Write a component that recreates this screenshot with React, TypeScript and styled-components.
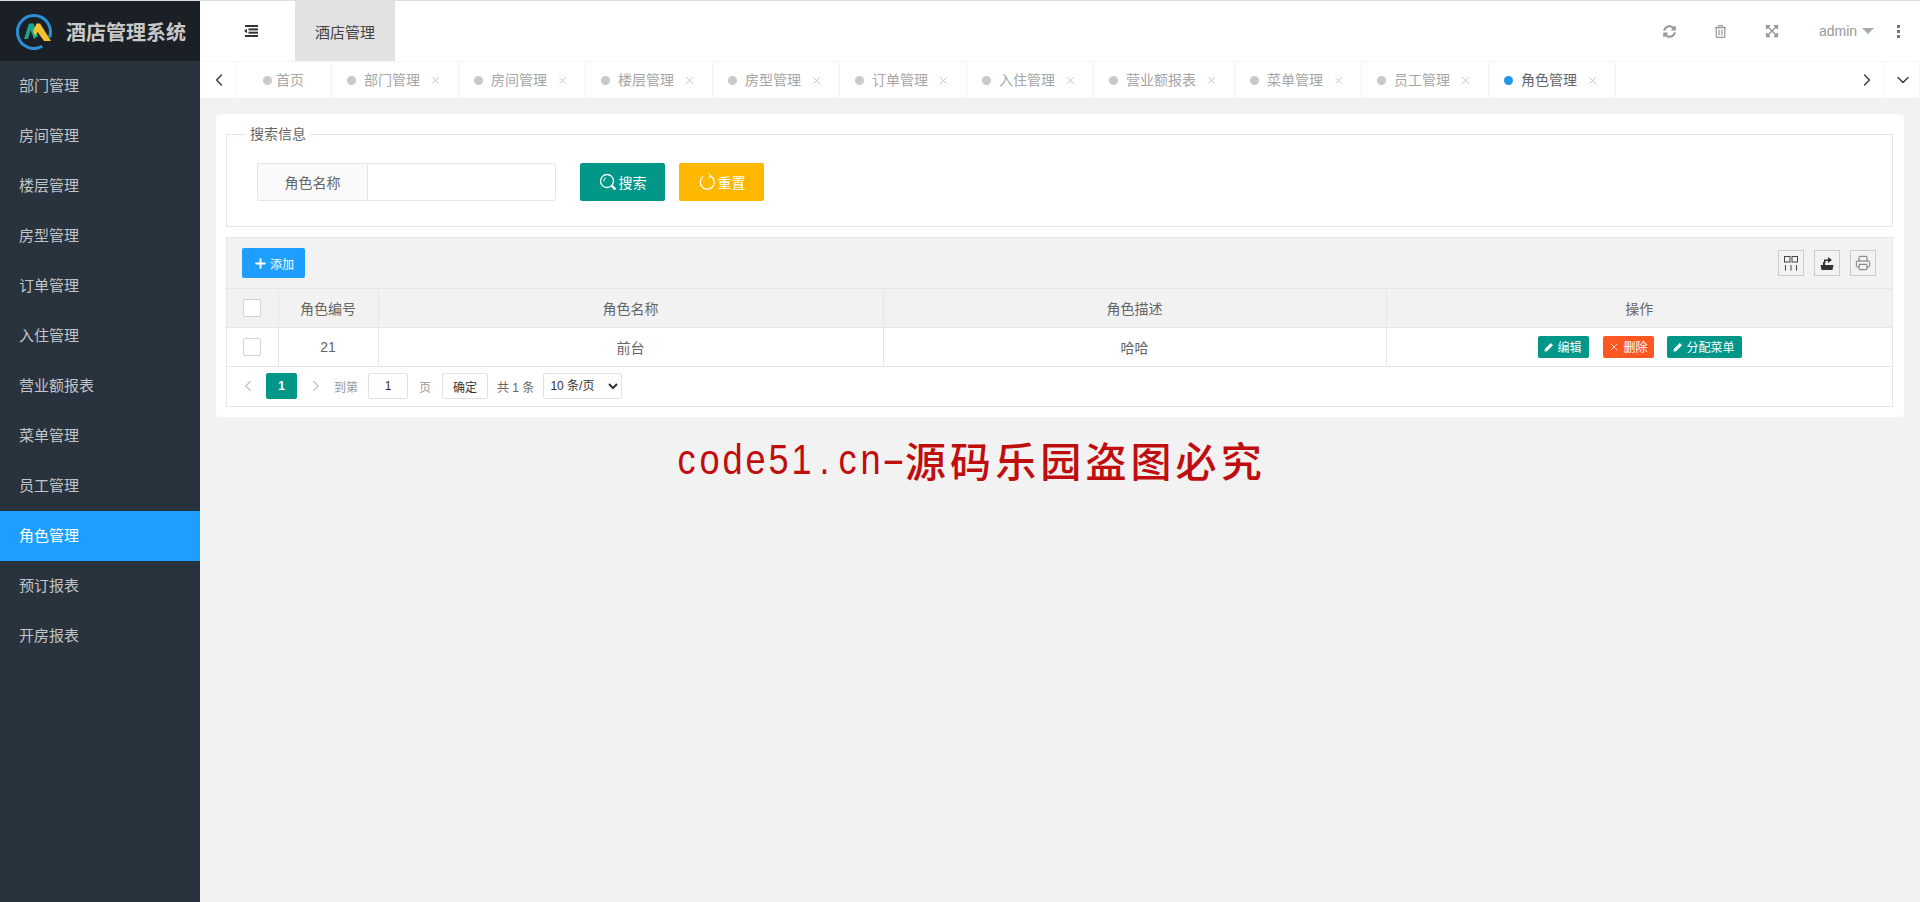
import React from "react";
import styled, { createGlobalStyle } from "styled-components";
import { ChevronLeft, ChevronRight, ChevronDown, Printer, X, Plus } from "lucide-react";
import { FaSyncAlt, FaRegTrashAlt, FaExpandArrowsAlt } from "react-icons/fa";

const Global = createGlobalStyle`
  html, body { margin: 0; padding: 0; height: 100%; background: #f2f2f2; }
  body { font-family: "Liberation Sans", "Noto Sans CJK SC", sans-serif; font-size: 14px; color: #666; overflow: hidden; }
  * { box-sizing: border-box; }
`;

const Page = styled.div`
  width: 1920px;
  height: 902px;
  display: flex;
  flex-direction: column;
  border-top: 1px solid #ddd;
`;
const Shell = styled.div`
  flex: 1;
  display: flex;
  min-height: 0;
`;
const Sidebar = styled.aside`
  width: 200px;
  flex: none;
  background: #28333e;
`;
const Brand = styled.div`
  height: 60px;
  background: #1b2027;
  display: flex;
  align-items: center;
  padding-left: 15px;
  gap: 13px;
`;
const BrandName = styled.span`
  font-size: 20px;
  font-weight: 700;
  color: #c8c8c8;
  white-space: nowrap;
`;
const Menu = styled.nav`
  display: flex;
  flex-direction: column;
`;
const MenuItem = styled.div<{ $active?: boolean }>`
  height: 50px;
  line-height: 50px;
  padding-left: 19px;
  font-size: 15px;
  color: ${(p) => (p.$active ? "#fff" : "rgba(255,255,255,.72)")};
  background: ${(p) => (p.$active ? "#1e9fff" : "transparent")};
`;
const Main = styled.main`
  flex: 1;
  min-width: 0;
  display: flex;
  flex-direction: column;
`;
const Header = styled.header`
  height: 60px;
  background: #fff;
  display: flex;
  align-items: stretch;
  color: #333;
`;
const Toggle = styled.div`
  width: 95px;
  display: flex;
  align-items: center;
  justify-content: center;
  padding-left: 7px;
  color: #333;
`;
const TopTab = styled.div`
  width: 100px;
  background: #e2e2e2;
  display: flex;
  align-items: center;
  justify-content: center;
  font-size: 15px;
  color: #444;
`;
const HeaderRight = styled.div`
  margin-left: auto;
  display: flex;
  align-items: stretch;
  color: #999;
`;
const HeaderIcon = styled.div`
  width: 51px;
  display: flex;
  align-items: center;
  justify-content: center;
`;
const UserItem = styled.div`
  width: 79px;
  padding-left: 22px;
  display: flex;
  align-items: center;
  gap: 5px;
  font-size: 14px;
  color: #999;
`;
const Caret = styled.span`
  width: 0;
  height: 0;
  border-style: solid;
  border-width: 6px 6px 0;
  border-color: #aaa transparent transparent;
`;
const DotsItem = styled.div`
  width: 44px;
  display: flex;
  flex-direction: column;
  align-items: center;
  justify-content: center;
  gap: 2px;
`;
const Dot3 = styled.i`
  width: 3px;
  height: 3px;
  background: #777;
`;
const TabBar = styled.div`
  height: 37px;
  background: #fff;
  border-top: 1px solid #f6f6f6;
  display: flex;
  align-items: stretch;
`;
const TabArrow = styled.div<{ $w: number }>`
  width: ${(p) => p.$w}px;
  flex: none;
  display: flex;
  align-items: center;
  justify-content: center;
  padding-left: 2px;
  color: #333;
  border-right: 1px solid #f6f6f6;
`;
const TabList = styled.div`
  flex: 1;
  display: flex;
  min-width: 0;
`;
const TabItem = styled.div<{ $home?: boolean }>`
  flex: none;
  display: flex;
  align-items: center;
  padding: 0 ${(p) => (p.$home ? "27px" : "17px 0 15px")};
  border-right: 1px solid #f2f2f2;
  font-size: 14px;
  line-height: 36px;
  white-space: nowrap;
`;
const TabLabel = styled.span<{ $active?: boolean }>`
  color: ${(p) => (p.$active ? "#666" : "#a6a6a6")};
`;
const TabDot = styled.i<{ $active?: boolean; $home?: boolean }>`
  width: 9px;
  height: 9px;
  border-radius: 50%;
  background: ${(p) => (p.$active ? "#2196e8" : "#c9c9c9")};
  margin-right: ${(p) => (p.$home ? 4 : 8)}px;
`;
const TabClose = styled.span`
  display: flex;
  margin-left: 10px;
  color: #aaa;
`;
const Content = styled.div`
  flex: 1;
  background: #f2f2f2;
  padding: 16px 16px 0;
`;
const Card = styled.section`
  background: #fff;
  border-radius: 4px;
  padding: 10px 11px 10px 10px;
`;
const Fieldset = styled.fieldset`
  margin: 0;
  padding: 19px 25px 25px 30px;
  border: 1px solid #e6e6e6;
`;
const Legend = styled.legend`
  margin-left: -11px;
  padding: 0 4px;
  font-size: 14px;
  line-height: 20px;
  color: #666;
`;
const SearchRow = styled.div`
  display: flex;
  align-items: stretch;
  height: 38px;
`;
const FieldLabel = styled.label`
  width: 110px;
  display: flex;
  align-items: center;
  justify-content: center;
  background: #fafafa;
  border: 1px solid #e6e6e6;
  border-right: 0;
  border-radius: 2px 0 0 2px;
  font-size: 14px;
  color: #666;
`;
const FieldInput = styled.input`
  width: 189px;
  border: 1px solid #e6e6e6;
  border-radius: 0 2px 2px 0;
  outline: 0;
  background: #fff;
`;
const SearchButton = styled.button<{ $bg: string; $gap: number }>`
  width: 85px;
  margin-left: ${(p) => p.$gap}px;
  border: 0;
  border-radius: 2px;
  background: ${(p) => p.$bg};
  color: #fff;
  font: inherit;
  font-size: 14px;
  display: flex;
  align-items: center;
  justify-content: center;
  gap: 2px;
  padding: 0;
`;
const TableBox = styled.div`
  margin-top: 10px;
  border: 1px solid #e6e6e6;
`;
const Toolbar = styled.div`
  height: 51px;
  background: #f2f2f2;
  display: flex;
  align-items: center;
  justify-content: space-between;
  padding: 0 16px 0 15px;
  border-bottom: 1px solid #e6e6e6;
`;
const AddButton = styled.button`
  width: 63px;
  height: 30px;
  border: 0;
  border-radius: 2px;
  background: #1e9fff;
  color: #fff;
  font: inherit;
  font-size: 12px;
  display: flex;
  align-items: center;
  justify-content: center;
  gap: 2px;
  padding: 0;
`;
const ToolIcons = styled.div`
  display: flex;
  gap: 10px;
`;
const ToolIcon = styled.div`
  width: 26px;
  height: 26px;
  border: 1px solid #ccc;
  display: flex;
  align-items: center;
  justify-content: center;
  color: #333;
`;
const Table = styled.table`
  width: 100%;
  table-layout: fixed;
  border-collapse: collapse;
  font-size: 14px;
`;
const Th = styled.th`
  height: 38px;
  background: #f2f2f2;
  border: 1px solid #e6e6e6;
  border-top: 0;
  font-weight: 400;
  color: #666;
  padding: 0;
  &:first-child { border-left: 0; }
  &:last-child { border-right: 0; }
`;
const Td = styled.td`
  height: 39px;
  background: #fff;
  border: 1px solid #e6e6e6;
  border-top: 0;
  text-align: center;
  color: #666;
  padding: 0;
  &:first-child { border-left: 0; }
  &:last-child { border-right: 0; }
`;
const Check = styled.span`
  display: inline-block;
  width: 18px;
  height: 18px;
  background: #fff;
  border: 1px solid #d2d2d2;
  border-radius: 2px;
  vertical-align: middle;
`;
const RowActions = styled.div`
  display: flex;
  align-items: center;
  padding-left: 151px;
`;
const RowButton = styled.button<{ $bg: string; $w: number; $gap: number }>`
  width: ${(p) => p.$w}px;
  height: 22px;
  margin-right: ${(p) => p.$gap}px;
  border: 0;
  border-radius: 2px;
  background: ${(p) => p.$bg};
  color: #fff;
  font: inherit;
  font-size: 12px;
  display: flex;
  align-items: center;
  justify-content: center;
  gap: 3px;
  padding: 0;
`;
const Pager = styled.div`
  height: 39px;
  display: flex;
  align-items: center;
  padding-left: 12px;
  font-size: 12px;
  color: #666;
`;
const PagerArrow = styled.span<{ $mr: number; $ml?: number }>`
  display: flex;
  color: #c2c2c2;
  margin-right: ${(p) => p.$mr}px;
  margin-left: ${(p) => p.$ml ?? 0}px;
`;
const PageNow = styled.span`
  width: 31px;
  height: 26px;
  background: #009688;
  color: #fff;
  border-radius: 2px;
  font-weight: 700;
  display: flex;
  align-items: center;
  justify-content: center;
`;
const PagerText = styled.span<{ $mr: number; $muted?: boolean }>`
  margin-right: ${(p) => p.$mr}px;
  color: ${(p) => (p.$muted ? "#999" : "#666")};
  white-space: nowrap;
`;
const PagerInput = styled.input`
  width: 40px;
  height: 26px;
  border: 1px solid #e2e2e2;
  border-radius: 2px;
  text-align: center;
  font: inherit;
  color: #333;
  outline: 0;
  margin-right: 11px;
  padding: 0;
`;
const PagerConfirm = styled.button`
  width: 46px;
  height: 26px;
  border: 1px solid #e2e2e2;
  border-radius: 2px;
  background: #fff;
  font: inherit;
  color: #333;
  margin-right: 9px;
  padding: 0;
`;
const PagerSelect = styled.select`
  width: 79px;
  height: 26px;
  border: 1px solid #e2e2e2;
  border-radius: 2px;
  background: #fff;
  font: inherit;
  color: #333;
  outline: 0;
  padding: 0 0 0 2px;
`;
const Watermark = styled.div`
  margin: 15px 0 0 459px;
  height: 55px;
  display: flex;
  align-items: center;
  color: #c00d0d;
  white-space: nowrap;
`;
const MarkCell = styled.span<{ $wide?: boolean }>`
  display: inline-block;
  width: 23px;
  text-align: center;
  font-size: 42px;
  line-height: 55px;
  font-family: "Liberation Sans", sans-serif;
  transform: scaleX(${(p) => (p.$wide ? 1.7 : 0.86)});
`;
const MarkCjk = styled.span`
  font-size: 41px;
  font-weight: 500;
  letter-spacing: 4.1px;
  line-height: 55px;
  font-family: "Noto Sans CJK SC", sans-serif;
`;

const Logo = () => (
  <svg width="38" height="38" viewBox="0 0 38 38">
    <path d="M27.250 34.300A16.500 16.500 0 1 1 34.500 25.600" fill="none" stroke="#2b8fd6" strokeWidth="3" />
    <path d="M9 27L14 11.500H18.500L23 24L19 27L15.500 18L13 27Z" fill="#17a88f" />
    <path d="M18 19L21.500 11.500H25L36 29H29L22.500 20L20 24Z" fill="#f2c230" />
  </svg>
);
const Indent = () => (
  <svg width="14" height="12" viewBox="0 0 14 12" fill="currentColor">
    <rect x="1" y="0" width="13" height="2" />
    <rect x="4.500" y="3.400" width="9.500" height="2" />
    <rect x="4.500" y="6.700" width="9.500" height="2" />
    <rect x="1" y="10" width="13" height="2" />
    <path d="M0 6L3 3.800V8.200Z" />
  </svg>
);
const SearchGlyph = () => (
  <svg width="18" height="18" viewBox="0 0 18 18" fill="none" stroke="#fff">
    <circle cx="8" cy="8" r="6.500" strokeWidth="1.300" />
    <path d="M4.800 8.500A3.500 3.500 0 0 1 7 4.600" strokeWidth="1" />
    <path d="M12.800 12.800L16.500 16.500" strokeWidth="2.400" />
  </svg>
);
const ResetGlyph = () => (
  <svg width="18" height="18" viewBox="0 0 18 18" fill="none" stroke="#fff" strokeWidth="1.300">
    <path d="M11.500 2.500A7 7 0 1 1 4 4.500" transform="rotate(12 9 9)" />
    <path d="M11 0.500L13.500 3.500L10 4.500" strokeWidth="1" />
  </svg>
);
const Pencil = () => (
  <svg width="10" height="10" viewBox="0 0 10 10" fill="#fff">
    <path d="M6.800 1L9 3.200L3 9.200L0.500 9.500L0.800 7Z" />
  </svg>
);
const ColsGlyph = () => (
  <svg width="16" height="16" viewBox="0 0 16 16" fill="none" stroke="#444" strokeWidth="1">
    <rect x="1.500" y="1.500" width="5.500" height="5.500" />
    <rect x="9" y="1.500" width="5.500" height="5.500" />
    <path d="M2.500 10V15.500M8 10V15.500M13.500 10V15.500" />
  </svg>
);
const ExportGlyph = () => (
  <svg width="16" height="16" viewBox="0 0 16 16" fill="#333">
    <path d="M1.500 10H14.500L13.500 15H2.500Z" />
    <path d="M4 10V7H6V10Z" />
    <path d="M5 8V4.500H9V2L13 5L9 8V6H6.500V8Z" />
  </svg>
);

const menu = ["部门管理", "房间管理", "楼层管理", "房型管理", "订单管理", "入住管理", "营业额报表", "菜单管理", "员工管理", "角色管理", "预订报表", "开房报表"];
const tabs = ["部门管理", "房间管理", "楼层管理", "房型管理", "订单管理", "入住管理", "营业额报表", "菜单管理", "员工管理", "角色管理"];
const markLatin = "code51.cn-".split("");

export default function App() {
  return (
    <>
      <Global />
      <Page>
        <Shell>
          <Sidebar>
            <Brand>
              <Logo />
              <BrandName>酒店管理系统</BrandName>
            </Brand>
            <Menu>
              {menu.map((m) => (
                <MenuItem key={m} $active={m === "角色管理"}>{m}</MenuItem>
              ))}
            </Menu>
          </Sidebar>
          <Main>
            <Header>
              <Toggle><Indent /></Toggle>
              <TopTab>酒店管理</TopTab>
              <HeaderRight>
                <HeaderIcon><FaSyncAlt size={13} /></HeaderIcon>
                <HeaderIcon><FaRegTrashAlt size={13} /></HeaderIcon>
                <HeaderIcon><FaExpandArrowsAlt size={14} /></HeaderIcon>
                <UserItem>admin<Caret /></UserItem>
                <DotsItem><Dot3 /><Dot3 /><Dot3 /></DotsItem>
              </HeaderRight>
            </Header>
            <TabBar>
              <TabArrow $w={36}><ChevronLeft size={20} strokeWidth={1.5} /></TabArrow>
              <TabList>
                <TabItem $home>
                  <TabDot $home />
                  <TabLabel>首页</TabLabel>
                </TabItem>
                {tabs.map((t) => {
                  const active = t === "角色管理";
                  return (
                    <TabItem key={t}>
                      <TabDot $active={active} />
                      <TabLabel $active={active}>{t}</TabLabel>
                      <TabClose><X size={11} strokeWidth={1.5} /></TabClose>
                    </TabItem>
                  );
                })}
              </TabList>
              <TabArrow $w={35}><ChevronRight size={20} strokeWidth={1.5} /></TabArrow>
              <TabArrow $w={36}><ChevronDown size={20} strokeWidth={1.5} /></TabArrow>
            </TabBar>
            <Content>
              <Card>
                <Fieldset>
                  <Legend>搜索信息</Legend>
                  <SearchRow>
                    <FieldLabel>角色名称</FieldLabel>
                    <FieldInput />
                    <SearchButton $bg="#009688" $gap={24}><SearchGlyph />搜索</SearchButton>
                    <SearchButton $bg="#ffb800" $gap={14}><ResetGlyph />重置</SearchButton>
                  </SearchRow>
                </Fieldset>
                <TableBox>
                  <Toolbar>
                    <AddButton><Plus size={15} strokeWidth={3} />添加</AddButton>
                    <ToolIcons>
                      <ToolIcon><ColsGlyph /></ToolIcon>
                      <ToolIcon><ExportGlyph /></ToolIcon>
                      <ToolIcon><Printer size={16} color="#777" strokeWidth={1.500} /></ToolIcon>
                    </ToolIcons>
                  </Toolbar>
                  <Table>
                    <colgroup>
                      <col width="51" />
                      <col width="100" />
                      <col width="505" />
                      <col width="503" />
                      <col />
                    </colgroup>
                    <thead>
                      <tr>
                        <Th><Check /></Th>
                        <Th>角色编号</Th>
                        <Th>角色名称</Th>
                        <Th>角色描述</Th>
                        <Th>操作</Th>
                      </tr>
                    </thead>
                    <tbody>
                      <tr>
                        <Td><Check /></Td>
                        <Td>21</Td>
                        <Td>前台</Td>
                        <Td>哈哈</Td>
                        <Td>
                          <RowActions>
                            <RowButton $bg="#009688" $w={51} $gap={14}><Pencil />编辑</RowButton>
                            <RowButton $bg="#ff5722" $w={51} $gap={13}><X size={12} strokeWidth={1.500} />删除</RowButton>
                            <RowButton $bg="#009688" $w={75} $gap={0}><Pencil />分配菜单</RowButton>
                          </RowActions>
                        </Td>
                      </tr>
                    </tbody>
                  </Table>
                  <Pager>
                    <PagerArrow $mr={9}><ChevronLeft size={18} strokeWidth={1.500} /></PagerArrow>
                    <PageNow>1</PageNow>
                    <PagerArrow $mr={9} $ml={10}><ChevronRight size={18} strokeWidth={1.500} /></PagerArrow>
                    <PagerText $mr={10} $muted>到第</PagerText>
                    <PagerInput readOnly value="1" />
                    <PagerText $mr={11} $muted>页</PagerText>
                    <PagerConfirm>确定</PagerConfirm>
                    <PagerText $mr={9}>共 1 条</PagerText>
                    <PagerSelect defaultValue="10">
                      <option value="10">10 条/页</option>
                      <option value="20">20 条/页</option>
                    </PagerSelect>
                  </Pager>
                </TableBox>
              </Card>
              <Watermark>
                {markLatin.map((c, i) => (
                  <MarkCell key={i} $wide={c === "-"}>{c}</MarkCell>
                ))}
                <MarkCjk>源码乐园盗图必究</MarkCjk>
              </Watermark>
            </Content>
          </Main>
        </Shell>
      </Page>
    </>
  );
}
